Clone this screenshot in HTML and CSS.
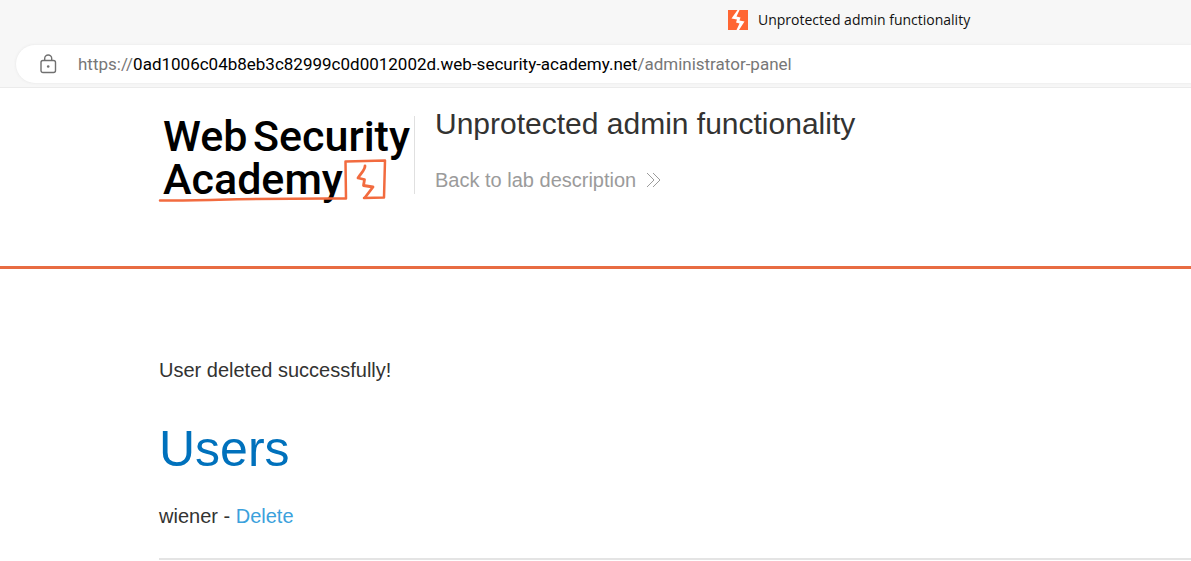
FILE: index.html
```html
<!DOCTYPE html>
<html lang="en">
<head>
<meta charset="utf-8">
<title>Unprotected admin functionality</title>
<link rel="stylesheet" href="styles.css">
</head>
<body>
<div class="browser">
  <div class="tab">
    <svg class="favicon" width="20" height="20" viewBox="0 0 20 20" aria-hidden="true">
      <rect width="20" height="20" fill="#ff6633"/>
      <path d="M9.500 0 3.500 8.500 9 9.500 8 12.500 11.500 13.500 8.500 20H11L16.500 11.500 11.500 10.500 12.500 7.500 8.500 6.500 11.500 0Z" fill="#fff"/>
    </svg>
    <span>Unprotected admin functionality</span>
  </div>
  <div class="address">
    <svg class="lock" width="17" height="20" viewBox="0 0 17 20" fill="none" stroke="#707070" stroke-width="1.400" aria-hidden="true">
      <rect x="1" y="6.500" width="14.500" height="12" rx="2"/>
      <path d="M4.700 6.500V4.500a3.500 3.500 0 0 1 7 0v2"/>
      <circle cx="8.200" cy="12.500" r="1.300" fill="#707070" stroke="none"/>
    </svg>
    <span class="url">https://<span class="host">0ad1006c04b8eb3c82999c0d0012002d.web-security-academy.net</span>/administrator-panel</span>
  </div>
</div>
<header class="lab-header">
  <div class="brand">
    <svg class="logo" width="256" height="96" viewBox="0 0 256 96" role="img" aria-label="Web Security Academy">
      <g class="wordmark">
        <text x="4" y="43">Web</text>
        <text x="94" y="43">Security</text>
        <text x="4" y="86">Academy</text>
      </g>
      <g fill="none" stroke="#f26b3f" stroke-linejoin="round" stroke-linecap="round">
        <path d="M1 92.500C42 93 90 90 187 90.500L186.500 53.500 226 52.500 225 89.500 205 90" stroke-width="2.500"/>
        <path d="M206 58C206 62 202 65 199 70L205.500 71.500 204.500 77.500 214 79 206 89.500" stroke-width="2.800"/>
      </g>
    </svg>
  </div>
  <div class="title">
    <h2>Unprotected admin functionality</h2>
    <a class="back" href="#">Back to lab description
      <svg width="15" height="16" viewBox="0 0 15 16" fill="none" stroke="#9b9b9b" aria-hidden="true"><path d="m1 1 7 7-7 7M7 1l7 7-7 7"/></svg>
    </a>
  </div>
</header>
<main class="content">
  <p>User deleted successfully!</p>
  <h1>Users</h1>
  <div class="user">wiener - <a href="#">Delete</a></div>
  <hr>
</main>
</body>
</html>
```
FILE: styles.css
```css
body {
  margin: 0;
  background: #fff;
  color: #333332;
  font: 20px/24px "Liberation Sans", Arial, sans-serif;
}
.browser {
  padding: 0 0 4px 16px;
  background: #f7f7f7;
  border-bottom: 1px solid #ebebeb;
  overflow: hidden;
}
.tab {
  display: flex;
  align-items: center;
  gap: 10px;
  height: 40px;
  margin-left: 712px;
  color: #111;
  font: 14px/20px "Open Sans", "Noto Sans", sans-serif;
  white-space: nowrap;
}
.address {
  display: flex;
  align-items: center;
  gap: 21px;
  height: 38px;
  margin-top: 5px;
  padding-left: 24px;
  border-radius: 19px 0 0 19px;
  background: #fff;
  box-shadow: 0 0 3px #e4e4e4;
  white-space: nowrap;
}
.url {
  color: #777;
  font: 17px/24px Roboto, "Noto Sans", sans-serif;
}
.host { color: #000; }
.lab-header {
  display: flex;
  padding: 20px 0 72px 159px;
  border-bottom: 3px solid #e86c42;
}
.brand {
  height: 78px;
  margin-top: 8px;
  border-right: 1px solid #e0e0e0;
}
.logo {
  display: block;
  margin-top: -8px;
  margin-right: -1px;
  overflow: visible;
}
.wordmark {
  fill: #000;
  font: 500 43px Roboto, sans-serif;
}
.title { padding-left: 20px; }
.title h2 {
  margin: 0 0 28px;
  font-size: 30px;
  font-weight: 400;
  line-height: 32px;
}
.back {
  display: flex;
  align-items: center;
  gap: 10px;
  color: #9b9b9b;
  text-decoration: none;
}
.content { padding: 89px 0 0 159px; }
.content p { margin: 0 0 48px; }
.content h1 {
  margin: 0 0 36px;
  color: #0071bc;
  font-size: 50px;
  font-weight: 400;
  line-height: 38px;
}
.user a { color: #3ba1dc; text-decoration: none; }
.content hr {
  height: 2px;
  margin: 30px 0 0;
  border: 0;
  background: #e4e4e4;
}
```
